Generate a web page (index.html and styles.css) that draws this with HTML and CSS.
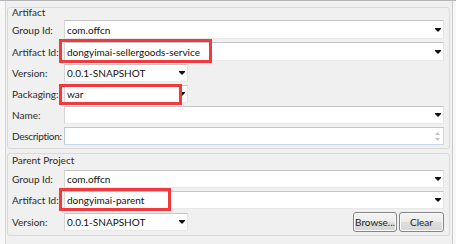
FILE: index.html
```html
<!DOCTYPE html>
<html>
<head>
<meta charset="utf-8">
<link rel="stylesheet" href="styles.css">
</head>
<body>
<div class="frame">
  <section class="group g1">
    <div class="title">Artifact</div>
    <div class="rows">
      <div class="row h19">
        <span class="lbl">Group Id:</span>
        <div class="field combo wide"><span class="val">com.offcn</span><svg class="arr" width="6" height="4" viewBox="0 0 6 4"><path d="M0 0H6V1L3 4L0 1Z"/></svg></div>
      </div>
      <div class="row h19">
        <span class="lbl">Artifact Id:</span>
        <div class="field combo wide"><span class="val">dongyimai-sellergoods-service</span><svg class="arr" width="6" height="4" viewBox="0 0 6 4"><path d="M0 0H6V1L3 4L0 1Z"/></svg><span class="mark m1"></span></div>
      </div>
      <div class="row">
        <span class="lbl">Version:</span>
        <div class="field combo narrow"><span class="val">0.0.1-SNAPSHOT</span><svg class="arr" width="6" height="4" viewBox="0 0 6 4"><path d="M0 0H6V1L3 4L0 1Z"/></svg></div>
      </div>
      <div class="row">
        <span class="lbl">Packaging:</span>
        <div class="field combo narrow"><span class="val">war</span><svg class="arr" width="6" height="4" viewBox="0 0 6 4"><path d="M0 0H6V1L3 4L0 1Z"/></svg><span class="mark m2"></span></div>
      </div>
      <div class="row">
        <span class="lbl">Name:</span>
        <div class="field combo wide"><span class="val"></span><svg class="arr" width="6" height="4" viewBox="0 0 6 4"><path d="M0 0H6V1L3 4L0 1Z"/></svg></div>
      </div>
      <div class="row">
        <span class="lbl tight">Description:</span>
        <div class="field text wide"><span class="val"></span><svg class="spin" width="5" height="9" viewBox="0 0 5 9"><path d="M0 3H5L2.5 0Z M0 6H5L2.5 9Z"/></svg></div>
      </div>
    </div>
  </section>
  <section class="group g2">
    <div class="title">Parent Project</div>
    <div class="rows">
      <div class="row">
        <span class="lbl">Group Id:</span>
        <div class="field combo wide"><span class="val">com.offcn</span><svg class="arr" width="6" height="4" viewBox="0 0 6 4"><path d="M0 0H6V1L3 4L0 1Z"/></svg></div>
      </div>
      <div class="row">
        <span class="lbl">Artifact Id:</span>
        <div class="field combo wide"><span class="val">dongyimai-parent</span><svg class="arr" width="6" height="4" viewBox="0 0 6 4"><path d="M0 0H6V1L3 4L0 1Z"/></svg><span class="mark m3"></span></div>
      </div>
      <div class="row h20">
        <span class="lbl">Version:</span>
        <div class="field combo narrow"><span class="val">0.0.1-SNAPSHOT</span><svg class="arr" width="6" height="4" viewBox="0 0 6 4"><path d="M0 0H6V1L3 4L0 1Z"/></svg></div>
        <div class="buttons">
          <button class="btn browse">Browse...</button>
          <button class="btn clear">Clear</button>
        </div>
      </div>
    </div>
  </section>
</div>
</body>
</html>
```
FILE: styles.css
```css
html, body {
  margin: 0;
  padding: 0;
}
body {
  width: 456px;
  height: 244px;
  box-sizing: border-box;
  background: #f7f7f7;
  border-top: 1px solid #b4b4b4;
  font-family: Lato, "Liberation Sans", sans-serif;
  font-size: 10px;
  color: #1e1e1e;
  overflow: hidden;
}
.frame {
  margin-left: 5px;
  width: 448px;
  height: 243px;
  box-sizing: border-box;
  border-left: 1px solid #d6d6d6;
  border-right: 1px solid #cbcbcb;
  background: #f0f0f0;
  padding: 6px 0 0 1px;
}
.group {
  width: 443px;
  box-sizing: border-box;
  border: 1px solid #d9d9d9;
  border-radius: 3px;
  padding: 0 5px 0 4px;
}
.g1 {
  height: 142px;
}
.g2 {
  height: 83px;
  margin-top: 4px;
}
.title {
  height: 10px;
  line-height: 10px;
  color: #2a2a2a;
  white-space: nowrap;
}
.g1 .title {
  margin: -1px 0 3px;
}
.g2 .title {
  margin: 1px 0 5px;
}
.rows {
  display: flex;
  flex-direction: column;
  gap: 3px;
}
.row {
  display: flex;
  align-items: center;
  height: 18px;
}
.row.h19 {
  height: 19px;
}
.row.h20 {
  height: 20px;
}
.lbl {
  width: 52px;
  flex: none;
  color: #2a2a2a;
  white-space: nowrap;
}
.lbl.tight {
  letter-spacing: -0.3px;
}
.field {
  position: relative;
  height: 100%;
  max-height: 19px;
  box-sizing: border-box;
  background: #fff;
  border: 1px solid;
  border-color: #c4c4c4 #e4e4e4 #e8e8e8 #d6d6d6;
  display: flex;
  align-items: center;
  padding-left: 2px;
  flex: none;
}
.h20 .field {
  height: 18px;
}
.wide {
  width: 380px;
}
.narrow {
  width: 124px;
}
.text {
  border-color: #b7c8dc #c9d8e8 #c9d8e8 #bccbdc;
}
.val {
  flex: 1;
  white-space: nowrap;
  color: #111;
}
.arr {
  flex: none;
  margin-right: 2px;
  fill: #111;
}
.spin {
  flex: none;
  margin-right: 3px;
  fill: #c3c3c3;
}
.mark {
  position: absolute;
  box-sizing: border-box;
  border: 3px solid #f13a3d;
  left: -6px;
}
.m1 {
  top: -4px;
  width: 153px;
  height: 24px;
}
.m2 {
  top: -2px;
  width: 123px;
  height: 21px;
}
.m3 {
  top: -4px;
  width: 112px;
  height: 23px;
}
.buttons {
  margin-left: auto;
  display: flex;
  gap: 2px;
  height: 20px;
}
.btn {
  font: inherit;
  color: #1e1e1e;
  height: 20px;
  padding: 0;
  margin: 0;
  border: 1px solid #858585;
  border-radius: 3px;
  background: linear-gradient(#f4f4f4 0%, #ececec 50%, #dedede 51%, #d6d6d6 100%);
  box-shadow: inset 0 0 0 1px #fbfbfb;
}
.browse {
  width: 44px;
}
.clear {
  width: 45px;
}
```
